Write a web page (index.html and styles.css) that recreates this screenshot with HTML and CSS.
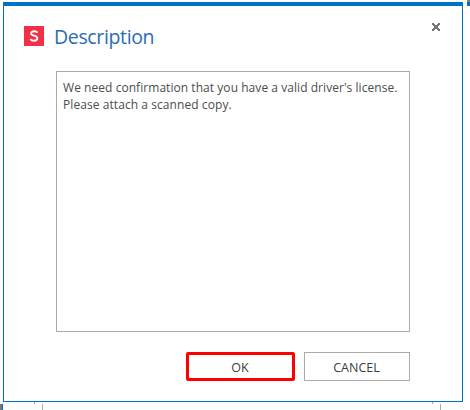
FILE: index.html
```html
<!DOCTYPE html>
<html lang="en">
<head>
<meta charset="utf-8">
<title>Description</title>
<link rel="stylesheet" href="styles.css">
</head>
<body>
<div class="backdrop">
  <i class="edge edge-top"></i>
  <i class="edge edge-left"></i>
  <i class="tick tick-a"></i>
  <i class="rule rule-a"></i>
  <i class="tick tick-b"></i>
  <i class="rule rule-b"></i>
</div>
<section class="dialog" role="dialog">
  <header class="header">
    <svg class="logo" width="20" height="20" viewBox="0 0 20 20"><rect width="20" height="20" fill="#f22f46"/><path d="M13.6 6.6C12.7 5.7 11.5 5.3 10.2 5.3C8.5 5.3 7.1 6 7.1 7.5C7.1 10.4 13.3 8.9 13.3 12.2C13.3 13.8 11.8 14.7 10 14.7C8.5 14.7 7.1 14.1 6.2 13.1" fill="none" stroke="#fff" stroke-width="1.9"/></svg>
    <h1 class="title">Description</h1>
    <svg class="close" width="8" height="8" viewBox="0 0 8 8" shape-rendering="crispEdges"><path d="M0 0h2v1h1v1h2v-1h1v-1h2v2h-1v1h-1v2h1v1h1v2h-2v-1h-1v-1h-2v1h-1v1h-2v-2h1v-1h1v-2h-1v-1h-1z" fill="#777"/></svg>
  </header>
  <div class="message"><p class="line">We need confirmation that you have a valid driver's license.</p><p class="line second">Please attach a scanned copy.</p></div>
  <footer class="actions">
    <button class="button primary">OK</button>
    <button class="button">CANCEL</button>
  </footer>
</section>
</body>
</html>
```
FILE: styles.css
```css
* { box-sizing: border-box; }
body {
  margin: 0;
  width: 470px;
  height: 410px;
  overflow: hidden;
  background: #fff;
  font-family: "Open Sans", "Noto Sans", sans-serif;
}
.backdrop i { position: absolute; background: #ababab; }
.backdrop .edge-top { left: 467px; top: 0; width: 3px; height: 6px; background: linear-gradient(#808080 2px, #0072c6 2px); }
.backdrop .edge-left { left: 0; top: 404px; width: 3px; height: 6px; background: linear-gradient(90deg, #777 2px, #0072c6 2px); }
.tick { top: 402px; width: 1px; height: 2px; }
.rule { top: 404px; width: 1px; height: 6px; }
.tick-a { left: 34px; }
.rule-a { left: 42px; }
.tick-b { left: 432px; }
.rule-b { left: 440px; }
.dialog {
  width: 460px;
  height: 400px;
  margin: 2px 0 0 3px;
  border: 1px solid #0072c6;
  border-top-width: 4px;
  background: #fff;
}
.header {
  display: flex;
  align-items: flex-start;
  height: 65px;
  padding: 0 22px 0 20px;
}
.logo { margin-top: 20px; }
.title {
  flex: 1;
  margin: 18px 0 0 10px;
  color: #2a6cb0;
  font-size: 19.5px;
  line-height: 26px;
  font-weight: 400;
  letter-spacing: -0.36px;
  white-space: nowrap;
}
.close { margin-top: 17px; }
.message {
  width: 354px;
  height: 261px;
  margin-left: 52px;
  padding: 7px 6px;
  border: 1px solid #ababab;
  color: #4c4c4c;
}
.line {
  margin: 0;
  font-size: 12px;
  line-height: 17px;
  letter-spacing: 0.05px;
  white-space: nowrap;
}
.second { letter-spacing: 0.07px; }
.actions {
  display: flex;
  gap: 9px;
  margin: 20px 0 0 182px;
}
.button {
  width: 106px;
  height: 29px;
  padding: 1px 1px 0 0;
  border: 1px solid #ababab;
  background: #fff;
  color: #3c3c3c;
  font: 12.5px/17px "Open Sans", "Noto Sans", sans-serif;
}
.primary {
  width: 109px;
  border: 3px solid #f00;
  border-radius: 2px;
}
```
